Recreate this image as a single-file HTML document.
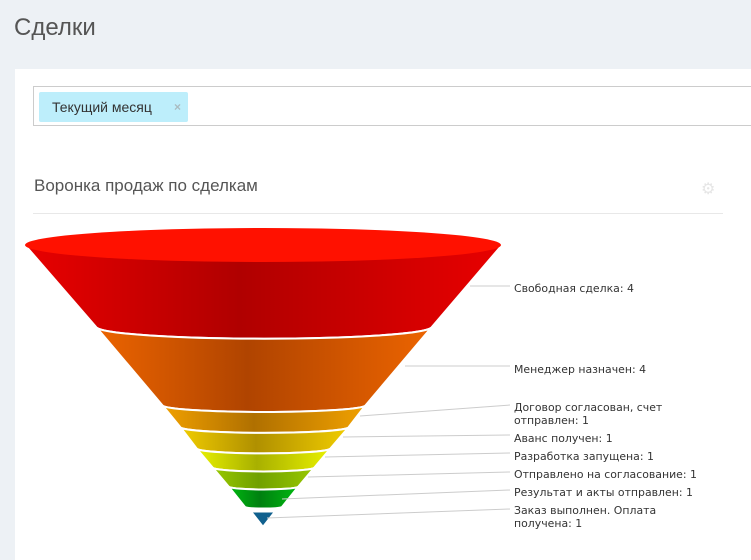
<!DOCTYPE html>
<html><head><meta charset="utf-8"><style>
body{margin:0;width:751px;height:560px;background:#edf1f5;font-family:"Liberation Sans",sans-serif;overflow:hidden;position:relative}
.h{position:absolute;left:14px;top:14px;font-size:24px;color:#555;font-weight:300}
.p{position:absolute;left:15px;top:69px;right:0;bottom:0;background:#fff}
.in{position:absolute;left:33px;top:86px;right:-2px;height:38px;border:1px solid #ccc;background:#fff}
.tag{position:absolute;left:39px;top:92px;width:149px;height:30px;background:#bdeefb;border-radius:2px;font-size:14px;color:#333;line-height:30px}
.tag span{position:absolute;left:13px}
.tag b{position:absolute;left:135px;color:#aabbc0;font-weight:bold;font-size:12px}
.t{position:absolute;left:34px;top:176px;font-size:17px;color:#555}
.hr{position:absolute;left:33px;top:213px;width:690px;height:1px;background:#e8e8e8}
svg{position:absolute;left:0;top:0}
</style></head><body>
<div class="h">Сделки</div>
<div class="p"></div>
<div class="in"></div>
<div class="tag"><span>Текущий месяц</span><b>×</b></div>
<div class="t">Воронка продаж по сделкам</div>
<div style="position:absolute;left:701px;top:179px;color:#e6e6e6;font-size:16px">⚙</div>
<div class="hr"></div>
<svg width="751" height="560" font-family="DejaVu Sans,sans-serif" font-size="10.9" fill="#333">
<defs>
<linearGradient id="g1"><stop offset="0" stop-color="#e80000"/><stop offset=".45" stop-color="#b00000"/><stop offset="1" stop-color="#e80000"/></linearGradient>
<linearGradient id="g2"><stop offset="0" stop-color="#ec6400"/><stop offset=".45" stop-color="#b04400"/><stop offset="1" stop-color="#ec6400"/></linearGradient>
<linearGradient id="g3"><stop offset="0" stop-color="#f0a000"/><stop offset=".45" stop-color="#b07000"/><stop offset="1" stop-color="#f0a000"/></linearGradient>
<linearGradient id="g4"><stop offset="0" stop-color="#f0cc00"/><stop offset=".45" stop-color="#b09000"/><stop offset="1" stop-color="#f0cc00"/></linearGradient>
<linearGradient id="g5"><stop offset="0" stop-color="#e8f000"/><stop offset=".45" stop-color="#a8b000"/><stop offset="1" stop-color="#e8f000"/></linearGradient>
<linearGradient id="g6"><stop offset="0" stop-color="#98c800"/><stop offset=".45" stop-color="#70a000"/><stop offset="1" stop-color="#98c800"/></linearGradient>
<linearGradient id="g7"><stop offset="0" stop-color="#00b810"/><stop offset=".45" stop-color="#008010"/><stop offset="1" stop-color="#00b810"/></linearGradient>
</defs>
<g stroke="#fff" stroke-width="2">
<path d="M25 245 L97 328 A168 12 0 0 0 431 328 L502 245 Z" fill="url(#g1)"/>
<path d="M97 328 A168 12 0 0 0 431 328 L365 406 A102 7 0 0 1 163 406 Z" fill="url(#g2)"/>
<path d="M163 406 A102 7 0 0 0 365 406 L348 428 A85 6 0 0 1 181 428 Z" fill="url(#g3)"/>
<path d="M181 428 A85 6 0 0 0 348 428 L330 449 A67 5 0 0 1 197 449 Z" fill="url(#g4)"/>
<path d="M197 449 A67 5 0 0 0 330 449 L314 468 A51 4 0 0 1 213 468 Z" fill="url(#g5)"/>
<path d="M213 468 A51 4 0 0 0 314 468 L298 487 A35 3 0 0 1 229 487 Z" fill="url(#g6)"/>
<path d="M229 487 A35 3 0 0 0 298 487 L282 507 A19 2 0 0 1 245 507 Z" fill="url(#g7)"/>
<path d="M252 512 L274 512 L263 526 Z" fill="#10608e" stroke-width="1"/>
</g>
<ellipse cx="263" cy="245" rx="238" ry="17" fill="#ff1100"/>
<g stroke="#ccc" stroke-width="1" fill="none">
<path d="M470 286 L510 286"/><path d="M405 366 L510 366"/><path d="M360 416 L510 405"/><path d="M343 437 L510 435"/><path d="M325 457 L510 453"/><path d="M308 477 L510 472"/><path d="M282 499 L510 490"/><path d="M267 518 L510 509"/>
</g>
<text x="514" y="292">Свободная сделка: 4</text>
<text x="514" y="373">Менеджер назначен: 4</text>
<text x="514" y="411">Договор согласован, счет</text>
<text x="514" y="424">отправлен: 1</text>
<text x="514" y="442">Аванс получен: 1</text>
<text x="514" y="460">Разработка запущена: 1</text>
<text x="514" y="478">Отправлено на согласование: 1</text>
<text x="514" y="496">Результат и акты отправлен: 1</text>
<text x="514" y="514">Заказ выполнен. Оплата</text>
<text x="514" y="527">получена: 1</text>
</svg>
</body></html>
